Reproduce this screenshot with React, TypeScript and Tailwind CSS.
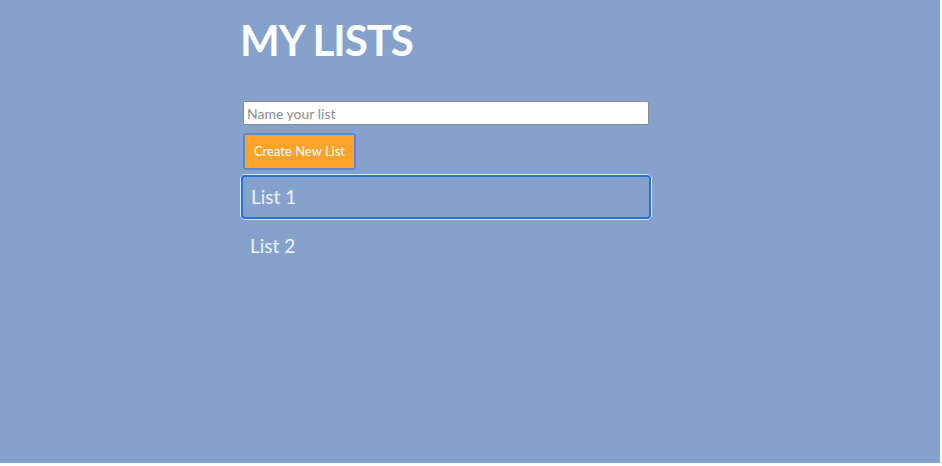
export default function App() {
  return (
    <div className="w-[942px] h-[466px] bg-white overflow-hidden">
      <div
        className="w-[940px] h-[463px] bg-[#84a2cc] pl-[240px]"
        style={{ fontFamily: 'Lato, "Open Sans", sans-serif' }}
      >
        <div className="w-[412px] flex flex-col">
          {/* title */}
          <h1 className="mt-[14px] text-[42px] leading-[52px] font-bold text-white tracking-[-1px]">MY LISTS</h1>

          {/* new list form */}
          <input
            className="mt-[35px] ml-[3px] w-[406px] h-[24px] bg-white border border-[#8a8a8a] rounded-[2px] px-[3px] text-[14px] text-[#333] placeholder:text-[#8f8f8f] outline-none"
            placeholder="Name your list"
          />
          <button className="mt-[8px] ml-[3px] w-[113px] h-[37px] bg-[#ffa22a] border-2 border-[#5f86cf] rounded-[3px] text-white text-[13px]">
            Create New List
          </button>

          {/* lists */}
          <div className="mt-[4px] h-[46px] rounded-[5px] border border-[#dce6f5]">
            <div className="h-full rounded-[4px] border-2 border-[#2f6fd8] flex items-center pl-[8px] text-[19px] text-[#f0f3fa]">
              List 1
            </div>
          </div>
          <div className="h-[52px] flex items-center pl-[10px] text-[19px] text-[#f0f3fa]">List 2</div>
        </div>
      </div>
    </div>
  )
}
